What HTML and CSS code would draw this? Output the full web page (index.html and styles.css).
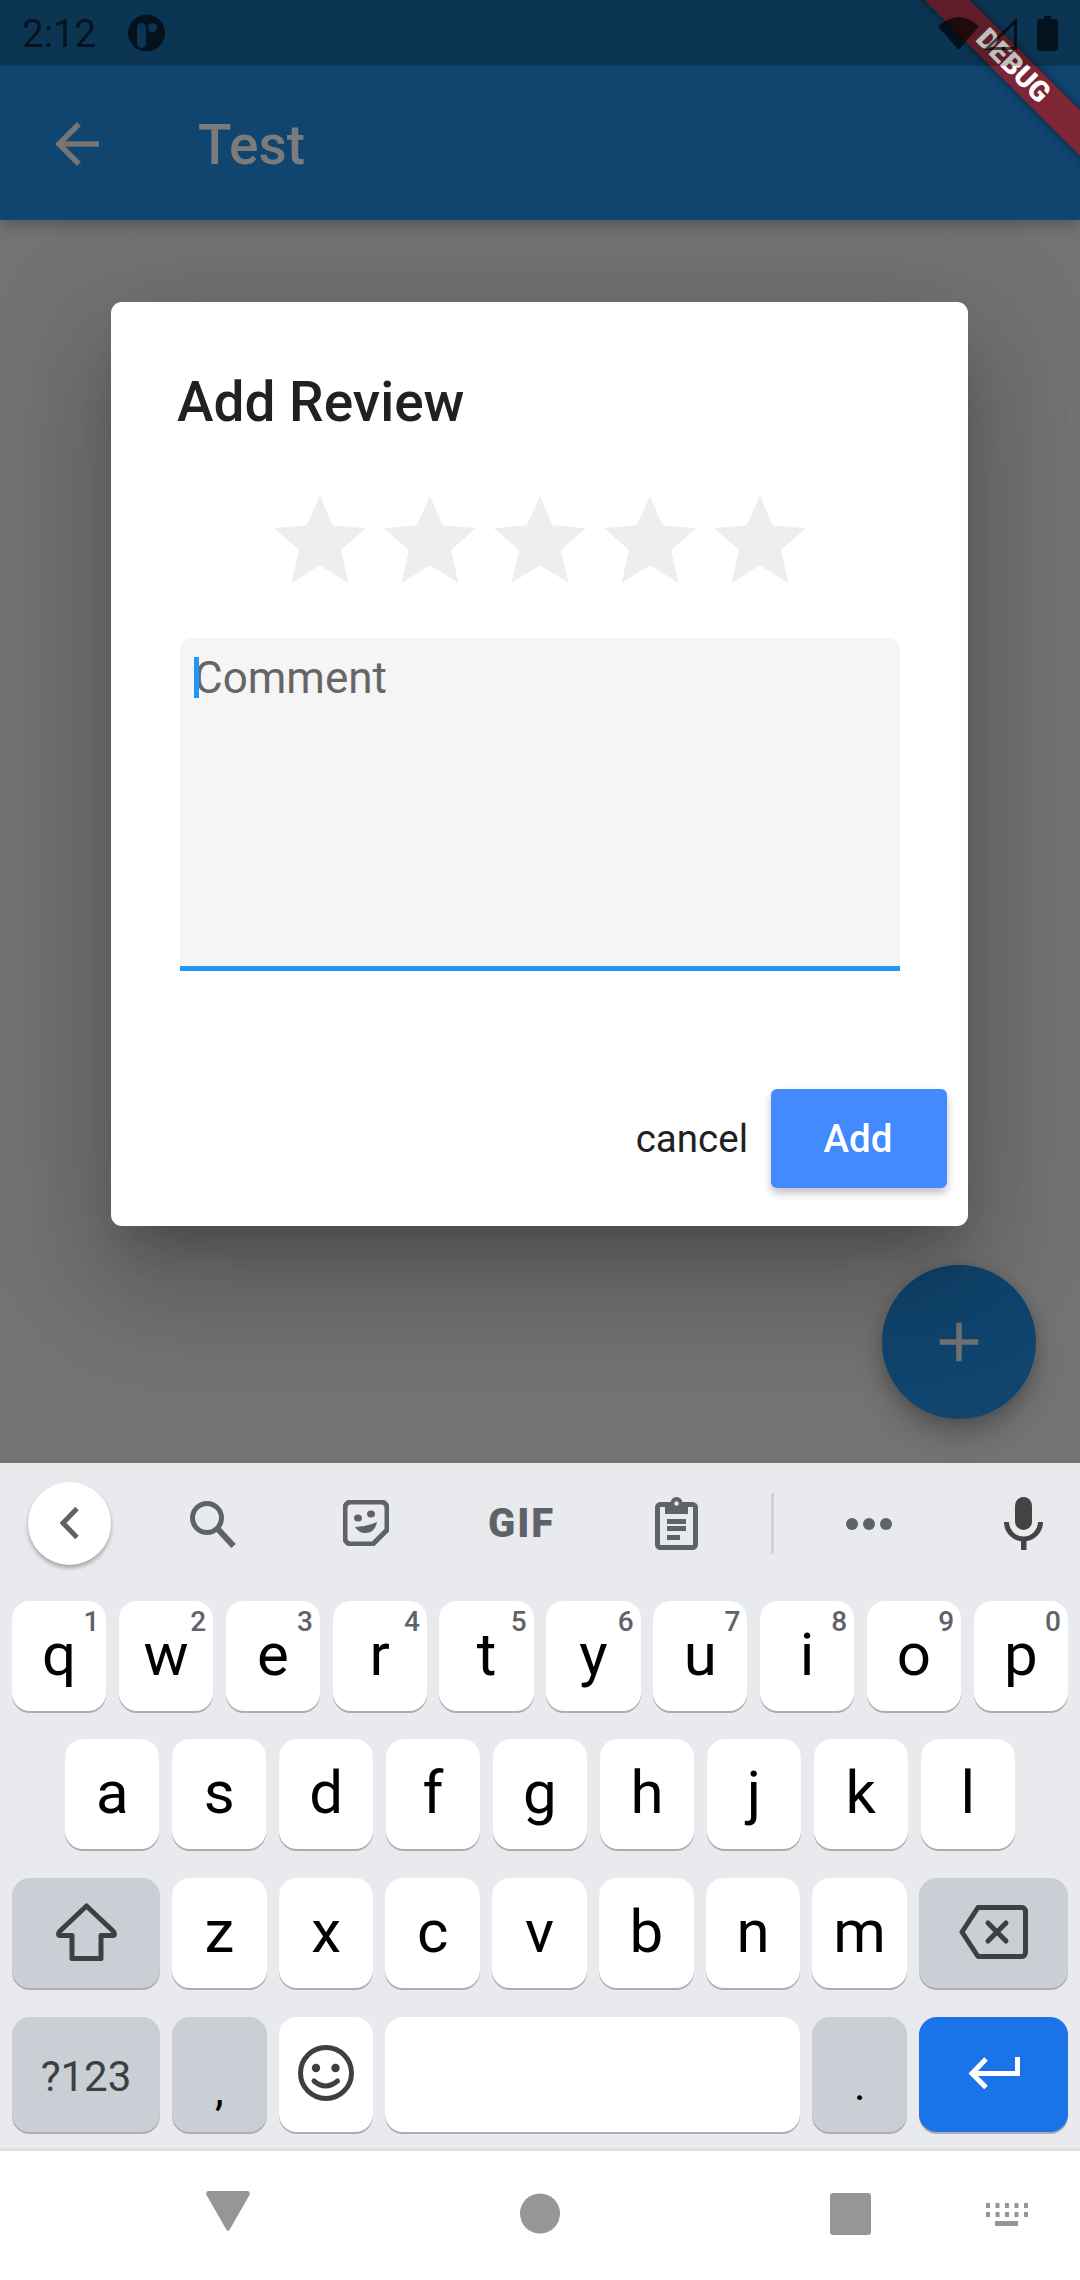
FILE: index.html
```html
<!DOCTYPE html>
<html lang="en">
<head>
    <meta charset="UTF-8">
    <meta name="viewport" content="width=device-width, initial-scale=1.0">
    <title>Add Review</title>
    <link rel="stylesheet" href="styles.css">
</head>
<body>

    <div class="screen">
        <div class="app">
            <div class="status-bar">
                <span class="time">2:12</span>
                <svg class="note-icon" width="37" height="38" viewBox="0 0 37 38">
                    <circle class="dark" cx="18.5" cy="19" r="18.5"/>
                    <rect class="cut" x="9" y="9" width="9" height="25" rx="4.5"/>
                    <circle class="cut" cx="24.5" cy="13.5" r="4.6"/>
                </svg>
                <svg class="wifi-icon" width="41" height="33" viewBox="0 0 41 33">
                    <path class="dark" d="M0 9.5Q20.5-9.5 41 9.5L20.5 33Z"/>
                </svg>
                <svg class="signal-icon" width="34" height="33" viewBox="0 0 34 33">
                    <path class="line" d="M4 31.5L32.5 4V31.5Z"/>
                </svg>
                <svg class="battery-icon" width="21" height="35" viewBox="0 0 21 35">
                    <path class="dark" d="M7 0H14V3H18Q21 3 21 6V32Q21 35 18 35H3Q0 35 0 32V6Q0 3 3 3H7Z"/>
                </svg>
            </div>

            <header class="app-bar">
                <svg class="back-arrow" width="66" height="66" viewBox="0 0 24 24">
                    <path d="M20 11H7.83l5.59-5.59L12 4l-8 8 8 8 1.41-1.41L7.83 13H20v-2z"/>
                </svg>
                <h1 class="app-title">Test</h1>
            </header>

            <div class="debug-banner">DEBUG</div>

            <div class="fab">
                <svg width="66" height="66" viewBox="0 0 24 24">
                    <path d="M19 13h-6v6h-2v-6H5v-2h6V5h2v6h6v2z"/>
                </svg>
            </div>

            <div class="dialog">
                <h2 class="dialog-title">Add Review</h2>
                <div class="stars">
                    <svg class="star" viewBox="0 0 92 87"><path d="M46 0L58.6 29.3 92 32.3 67 54 74.6 87 46 69.3 17.4 87 25 54 0 32.3 32.7 29.3Z"/></svg>
                    <svg class="star" viewBox="0 0 92 87"><path d="M46 0L58.6 29.3 92 32.3 67 54 74.6 87 46 69.3 17.4 87 25 54 0 32.3 32.7 29.3Z"/></svg>
                    <svg class="star" viewBox="0 0 92 87"><path d="M46 0L58.6 29.3 92 32.3 67 54 74.6 87 46 69.3 17.4 87 25 54 0 32.3 32.7 29.3Z"/></svg>
                    <svg class="star" viewBox="0 0 92 87"><path d="M46 0L58.6 29.3 92 32.3 67 54 74.6 87 46 69.3 17.4 87 25 54 0 32.3 32.7 29.3Z"/></svg>
                    <svg class="star" viewBox="0 0 92 87"><path d="M46 0L58.6 29.3 92 32.3 67 54 74.6 87 46 69.3 17.4 87 25 54 0 32.3 32.7 29.3Z"/></svg>
                </div>
                <div class="comment-field">
                    <span class="caret"></span>
                    <span class="placeholder">Comment</span>
                </div>
                <div class="dialog-actions">
                    <span class="cancel">cancel</span>
                    <span class="add-button">Add</span>
                </div>
            </div>
        </div>

        <div class="keyboard">
            <div class="toolbar">
                <div class="tool-back">
                    <svg width="19" height="32" viewBox="0 0 19 32"><path class="tool-line" d="M17 1.5L3 16 17 30.5"/></svg>
                </div>
                <svg class="tool-search" width="46" height="47" viewBox="0 0 46 47">
                    <circle class="tool-line" cx="17" cy="17" r="14.5"/>
                    <path class="tool-line tool-thick" d="M27 27L43.5 45"/>
                </svg>
                <svg class="tool-sticker" width="46" height="46" viewBox="0 0 46 46">
                    <path class="tool-line" d="M8 2H38A6 6 0 0 1 44 8V30L30 44H8A6 6 0 0 1 2 38V8A6 6 0 0 1 8 2Z"/>
                    <path class="tool-fill" d="M45 31L31 45C32 37 37 32 45 31Z"/>
                    <ellipse class="tool-fill" cx="15" cy="18" rx="4" ry="3.5"/>
                    <ellipse class="tool-fill" cx="28" cy="14" rx="4" ry="3.5"/>
                    <path class="tool-fill" d="M12 27Q23 27 34 22Q32 33 22 33Q16 33 12 27Z"/>
                </svg>
                <span class="tool-gif">GIF</span>
                <svg class="tool-clip" width="43" height="53" viewBox="0 0 43 53">
                    <rect class="tool-line" x="2.5" y="7.5" width="38" height="43" rx="3"/>
                    <path class="tool-fill" d="M10 6H15.5A6 6 0 0 1 27.5 6H33V17H10Z"/>
                    <circle class="tool-hole" cx="21.5" cy="6.5" r="2.2"/>
                    <rect class="tool-fill" x="12" y="22" width="19" height="5"/>
                    <rect class="tool-fill" x="12" y="29" width="19" height="5"/>
                    <rect class="tool-fill" x="12" y="38" width="13" height="5"/>
                </svg>
                <span class="tool-divider"></span>
                <svg class="tool-dots" width="46" height="12" viewBox="0 0 46 12">
                    <circle class="tool-fill" cx="6" cy="6" r="6"/>
                    <circle class="tool-fill" cx="23" cy="6" r="6"/>
                    <circle class="tool-fill" cx="40" cy="6" r="6"/>
                </svg>
                <svg class="tool-mic" width="39" height="53" viewBox="0 0 39 53">
                    <rect class="mic-fill" x="11" y="0" width="17" height="33" rx="8.5"/>
                    <path class="mic-line" d="M2.5 25A17 17 0 0 0 36.5 25"/>
                    <rect class="mic-fill" x="17" y="40" width="5.5" height="13"/>
                </svg>
            </div>

            <div class="key-row">
                <div class="key">q<span class="hint">1</span></div>
                <div class="key">w<span class="hint">2</span></div>
                <div class="key">e<span class="hint">3</span></div>
                <div class="key">r<span class="hint">4</span></div>
                <div class="key">t<span class="hint">5</span></div>
                <div class="key">y<span class="hint">6</span></div>
                <div class="key">u<span class="hint">7</span></div>
                <div class="key">i<span class="hint">8</span></div>
                <div class="key">o<span class="hint">9</span></div>
                <div class="key">p<span class="hint">0</span></div>
            </div>
            <div class="key-row inset">
                <div class="key">a</div>
                <div class="key">s</div>
                <div class="key">d</div>
                <div class="key">f</div>
                <div class="key">g</div>
                <div class="key">h</div>
                <div class="key">j</div>
                <div class="key">k</div>
                <div class="key">l</div>
            </div>
            <div class="key-row lower">
                <div class="key key-left grey">
                    <svg width="61" height="58" viewBox="0 0 61 58"><path class="key-line" d="M30.5 3L3.5 28.5Q1 32.5 5 32.5H16V55.5H45V32.5H56Q60 32.5 57.5 28.5Z"/></svg>
                </div>
                <div class="key">z</div>
                <div class="key">x</div>
                <div class="key">c</div>
                <div class="key">v</div>
                <div class="key">b</div>
                <div class="key">n</div>
                <div class="key">m</div>
                <div class="key key-right grey">
                    <svg width="69" height="54" viewBox="0 0 69 54">
                        <path class="key-line" d="M19 2.5L3 27 19 51.5H62A4 4 0 0 0 66.5 47.5V6.5A4 4 0 0 0 62 2.5Z"/>
                        <path class="key-line" d="M29 18L47 36M47 18L29 36"/>
                    </svg>
                </div>
            </div>
            <div class="key-row lower last">
                <div class="key key-left grey symbols">?123</div>
                <div class="key grey punct">,</div>
                <div class="key">
                    <svg width="56" height="56" viewBox="0 0 56 56">
                        <circle class="key-line" cx="28" cy="28" r="25.5"/>
                        <circle class="smile-eye" cx="18" cy="23" r="4.2"/>
                        <circle class="smile-eye" cx="37.5" cy="23" r="4.2"/>
                        <path class="key-line" d="M16 36Q27.5 46 39.5 36"/>
                    </svg>
                </div>
                <div class="key space"></div>
                <div class="key grey punct dot">.</div>
                <div class="key key-right enter">
                    <svg width="52" height="32" viewBox="0 0 52 32">
                        <path class="enter-line" d="M49.5 0V16.5H6M18 2L4 16.5 18 30.5"/>
                    </svg>
                </div>
            </div>
        </div>

        <div class="nav-bar">
            <svg class="nav-back" width="44" height="40" viewBox="0 0 44 40"><path d="M3 0H41Q44.500 0 43.500 4L24 38Q22 42 20 38L.5 4Q-.5 0 3 0Z"/></svg>
            <svg class="nav-home" width="40" height="41" viewBox="0 0 40 41"><circle cx="20" cy="20.500" r="20"/></svg>
            <svg class="nav-recent" width="41" height="42" viewBox="0 0 41 42"><rect width="41" height="42" rx="3"/></svg>
            <svg class="nav-keys" width="42" height="23" viewBox="0 0 42 23">
                <rect x="0" y="0" width="4" height="5"/><rect x="9.500" y="0" width="4" height="5"/><rect x="19" y="0" width="4" height="5"/><rect x="28.500" y="0" width="4" height="5"/><rect x="38" y="0" width="4" height="5"/>
                <rect x="0" y="9" width="4" height="5"/><rect x="9.500" y="9" width="4" height="5"/><rect x="19" y="9" width="4" height="5"/><rect x="28.500" y="9" width="4" height="5"/><rect x="38" y="9" width="4" height="5"/>
                <rect x="9" y="18" width="23" height="5"/>
            </svg>
        </div>
    </div>

</body>
</html>
```

FILE: styles.css
```css
body { margin: 0; font-family: Roboto, sans-serif; background: #737373; }
.screen { width: 1080px; height: 2280px; display: flex; flex-direction: column; overflow: hidden; }

/* app behind the dialog scrim */
.app { position: relative; height: 1463px; background: #737373; }
.status-bar { position: relative; z-index: 3; height: 66px; display: flex; align-items: center; padding-left: 22px; background: linear-gradient(rgba(0,0,0,.25), rgba(0,0,0,.25)); }
.time { font-size: 38.5px; color: rgba(0,0,0,.65); width: 106px; }
.note-icon { margin-top: -1px; }
.wifi-icon { margin-left: 773px; }
.signal-icon { margin-left: 4px; }
.battery-icon { margin-left: 20px; }
.dark { fill: rgba(0,0,0,.65); }
.cut { fill: #0c3354; }
.line { fill: none; stroke: rgba(0,0,0,.65); stroke-width: 3; }

.app-bar { height: 153px; margin-top: -66px; padding-top: 67px; display: flex; align-items: center; background: #10456f; box-shadow: 0 5px 14px rgba(0,0,0,.25); }
.back-arrow { margin-left: 44px; fill: #757575; }
.app-title { margin: 2px 0 0 88px; font-size: 55px; font-weight: 500; color: #7b7b7b; }

.debug-banner { position: absolute; z-index: 2; left: 863px; top: 50px; width: 300px; height: 32px; transform: rotate(45deg); background: rgba(190,20,20,.64); box-shadow: 0 0 8px rgba(0,0,0,.5); color: #fff; font-size: 28.5px; font-weight: 900; line-height: 31px; text-align: center; }

.fab { position: absolute; left: 882px; top: 1265px; width: 154px; height: 154px; border-radius: 50%; background: #10456f; display: flex; align-items: center; justify-content: center; box-shadow: 0 16px 28px rgba(0,0,0,.22), 0 3px 14px rgba(0,0,0,.15); fill: #737373; }

/* dialog */
.dialog { position: absolute; left: 111px; top: 302px; width: 857px; height: 924px; background: white; border-radius: 11px; box-shadow: 0 66px 104px 8px rgba(0,0,0,.14), 0 25px 126px 22px rgba(0,0,0,.12), 0 30px 41px -19px rgba(0,0,0,.2); }
.dialog-title { margin: 67px 0 0 66px; font-size: 55px; line-height: 66px; font-weight: 500; color: #212121; }
.stars { display: flex; justify-content: center; gap: 18px; margin-top: 61px; }
.star { width: 92px; height: 87px; fill: #eeeeee; }
.comment-field { position: relative; width: 720px; height: 328px; margin: 55px 0 0 69px; border-bottom: 5px solid #2196f3; border-radius: 11px 11px 0 0; background: #f5f5f5; }
.placeholder { display: block; padding: 15px 0 0 14px; font-size: 44px; line-height: 50px; color: #666666; }
.caret { position: absolute; left: 14px; top: 19px; width: 5px; height: 41px; background: #2196f3; }
.dialog-actions { display: flex; justify-content: flex-end; align-items: center; gap: 23px; margin: 118px 21px 0 0; }
.cancel { font-size: 38.5px; color: #212121; }
.add-button { width: 174px; height: 99px; padding-right: 2px; display: flex; align-items: center; justify-content: center; border-radius: 6px; background: #448aff; color: white; font-size: 38.5px; font-weight: 500; box-shadow: 0 5px 8px rgba(0,0,0,.25); }

/* keyboard */
.keyboard { height: 688px; padding: 0 12px; background: #e8eaed; box-sizing: border-box; border-bottom: 3px solid #dfe0e2; }
.toolbar { height: 120px; margin: 0 -12px 18px; display: flex; align-items: center; }
.tool-back { width: 83px; height: 83px; margin-left: 28px; border-radius: 50%; background: white; box-shadow: 0 3px 4px rgba(0,0,0,.3); display: flex; align-items: center; justify-content: center; }
.tool-line { fill: none; stroke: #5f6368; stroke-width: 5; }
.tool-thick { stroke-width: 6; }
.tool-fill { fill: #5f6368; }
.tool-hole { fill: #e8eaed; }
.tool-search { margin-left: 79px; margin-top: 3px; }
.tool-sticker { margin-left: 107px; }
.tool-gif { width: 65px; margin-left: 99px; color: #5f6368; font-size: 40px; font-weight: 900; letter-spacing: 2px; text-align: center; }
.tool-clip { margin-left: 102px; margin-top: 1px; }
.tool-divider { width: 3px; height: 61px; margin-left: 73px; background: #d0d2d6; }
.tool-dots { margin-left: 72px; margin-top: 2px; }
.tool-mic { margin-left: 112px; }
.mic-fill { fill: #444444; }
.mic-line { fill: none; stroke: #444444; stroke-width: 5; }

.key-row { display: flex; gap: 12.5px; height: 110px; margin-bottom: 28px; }
.key-row.inset { padding: 0 53px; }
.key-row.lower { gap: 12px; margin-top: 29px; }
.key-row.last { height: 115px; margin-bottom: 0; }
.key { position: relative; flex: 1; display: flex; align-items: center; justify-content: center; padding-bottom: 3px; box-sizing: border-box; border-radius: 18px; background: white; box-shadow: 0 2px 0 #abadb1; color: black; font-size: 60px; }
.key-left { flex: 0 0 148px; }
.key-right { flex: 0 0 149px; }
.key.space { flex: 0 0 415px; }
.grey { background: #cbced5; }
.enter { background: #1a73e8; }
.hint { position: absolute; top: 4px; right: 7px; color: #5f6368; font-size: 28px; font-weight: 500; line-height: 34px; }
.symbols { padding: 3px 0 0; color: #3c4043; font-size: 42px; }
.punct { padding-top: 34px; font-size: 44px; }
.punct.dot { padding-top: 24px; }
.key-line { fill: none; stroke: #3c4043; stroke-width: 5; stroke-linejoin: round; stroke-linecap: round; }
.smile-eye { fill: #3c4043; }
.enter-line { fill: none; stroke: white; stroke-width: 5; }

/* android nav */
.nav-bar { flex: 1; display: flex; align-items: flex-start; background: white; fill: #969696; }
.nav-back { margin: 40px 0 0 206px; }
.nav-home { margin: 42px 0 0 270px; }
.nav-recent { margin: 42px 0 0 270px; }
.nav-keys { margin: 52px 0 0 115px; }
```
